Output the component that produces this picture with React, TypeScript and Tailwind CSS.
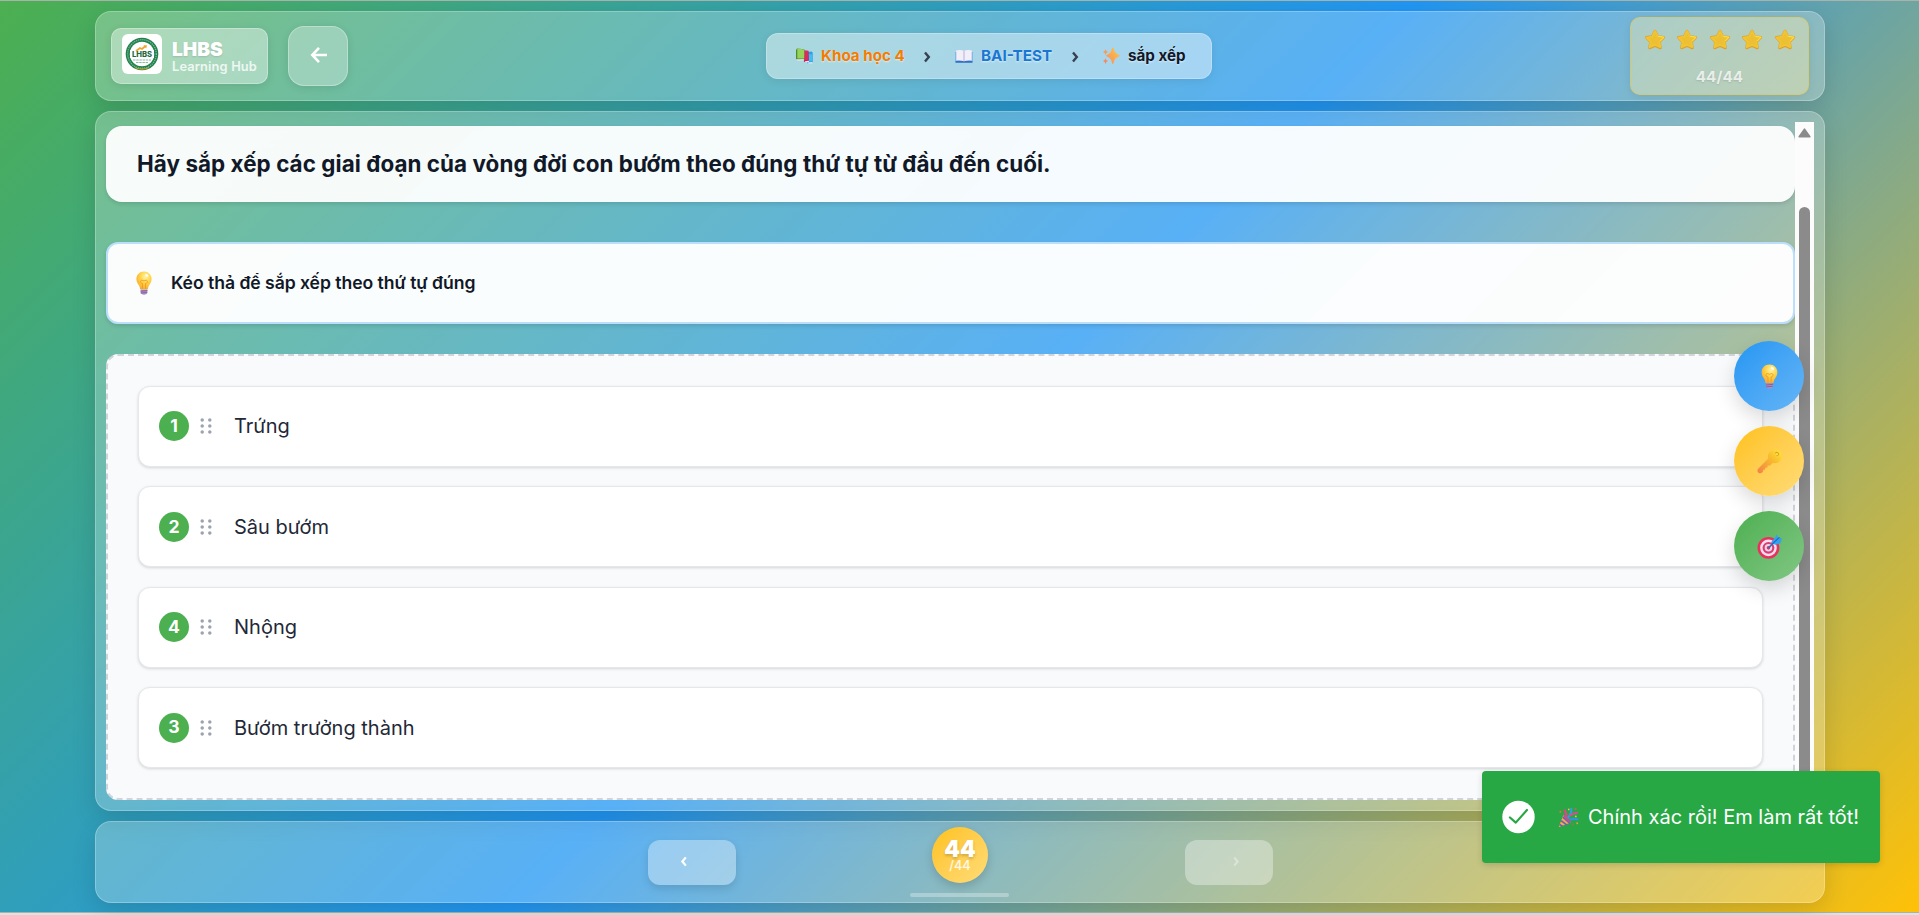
import type { ReactNode } from "react";

type IconProps = { className?: string };

function Bulb({ className }: IconProps) {
  return (
    <svg viewBox="0 0 24 24" className={className}>
      <defs>
        <radialGradient id="bulbGlass" cx="0.6" cy="0.3" r="0.75">
          <stop offset="0" stopColor="#fff3a8" />
          <stop offset="0.45" stopColor="#ffd54a" />
          <stop offset="1" stopColor="#f9a62b" />
        </radialGradient>
      </defs>
      <path d="M12 .4c4.400 0 7.600 3.300 7.600 7.500 0 3-1.500 4.700-2.700 6.700-.6 1-.9 2.200-1 3.600H8.100c-.1-1.400-.4-2.600-1-3.600-1.200-2-2.700-3.700-2.700-6.700C4.400 3.700 7.600.4 12 .4z" fill="url(#bulbGlass)" />
      <path d="M10.500 18v-5.500c-2.200 0-2.600-3.300-.5-3.300 1 0 1.300.7 2 .7s1-.7 2-.7c2.100 0 1.700 3.300-.5 3.300V18" fill="none" stroke="#f39a1f" strokeWidth="0.9" />
      <ellipse cx="14.800" cy="4.300" rx="1.800" ry="1.300" fill="#fffbe6" transform="rotate(35 14.800 4.300)" />
      <path d="M8.600 18.400h6.800v3.400c0 1-1.500 1.900-3.400 1.900s-3.400-.9-3.400-1.900z" fill="#a98fc4" />
      <path d="M8.600 20.200l6.800-.7M8.800 22l6.400-.7" stroke="#7d5a94" strokeWidth="0.8" />
    </svg>
  );
}

function KeyIcon({ className }: IconProps) {
  return (
    <svg viewBox="0 0 24 24" className={className}>
      <defs>
        <linearGradient id="keyBody" gradientUnits="userSpaceOnUse" x1="22" y1="2" x2="2" y2="22">
          <stop offset="0" stopColor="#ffe03a" />
          <stop offset="0.4" stopColor="#f8ba2c" />
          <stop offset="1" stopColor="#f58448" />
        </linearGradient>
      </defs>
      <path d="M11 8.800L.9 19.200c-.7.800-.6 2-.1 2.900.5 1 1.500 1.300 2.500 1.100 1.400-.2 2-.8 2.600-1.900l-.1-1.500 1.800.1.400-2 2-.2.200-1.800 2 .1 3.600-3.200z" fill="url(#keyBody)" />
      <path d="M12 2.900c2.400-2.700 7.100-3.400 9.700-.9 2.700 2.500 2.500 7 .2 9.500-2.400 2.600-6.600 2.900-9.300.5-2.600-2.400-2.700-6.700-.6-9.100z" fill="url(#keyBody)" />
      <ellipse cx="19.300" cy="4.600" rx="2" ry="1.600" fill="#dba013" transform="rotate(35 19.300 4.600)" />
      <ellipse cx="18.900" cy="5" rx="1.400" ry="1.100" fill="#ffdb5c" />
    </svg>
  );
}

function Target({ className }: IconProps) {
  return (
    <svg viewBox="0 0 24 24" className={className}>
      <circle cx="11" cy="13.300" r="10.500" fill="#e8315f" />
      <circle cx="11" cy="13.300" r="8" fill="#f3dfef" />
      <circle cx="11" cy="13.300" r="5.700" fill="#dd3a70" />
      <circle cx="11" cy="13.300" r="3.600" fill="#f1d5e6" />
      <circle cx="11" cy="13.300" r="1.700" fill="#d83168" />
      <path d="M11 13.300l6-5.600" stroke="#3b6fb0" strokeWidth="1.500" />
      <path d="M13.300 8.200l4.600-5.400.9-2.500 1.600 3.300 3.500.4-.5 1.700-1 3.300-4.800 1.300z" fill="#35a0ee" />
      <path d="M14.500 9.700l7-6.500" stroke="#1668c4" strokeWidth="1" />
    </svg>
  );
}

function Star() {
  return (
    <svg viewBox="0 0 24 24" className="h-[22px] w-[22px]">
      <path d="M12 2.200l3 6 6.600 1-4.700 4.800 1 6.700L12 18l-5.900 2.700 1-6.700-4.700-4.800 6.600-1z" fill="#d99a2b" stroke="#dba02c" strokeWidth="2.900" strokeLinejoin="round" />
      <path d="M12 2.200l3 6 6.400 1-4.600 4.500 1 6L12 17.300l-5.800 2.600 1-6-4.600-4.500 6.400-1z" fill="#edc033" stroke="#f0c433" strokeWidth="2" strokeLinejoin="round" />
      <path d="M15.500 7.800l6.300 1.200-4 4" fill="none" stroke="#ffe04a" strokeWidth="1" />
    </svg>
  );
}

function Books() {
  return (
    <svg viewBox="0 0 18 18" className="h-[18px] w-[18px]">
      <path d="M10 5.500l6.500-.9 1.200 1v10.200l-5.300.5z" fill="#2e9fe6" />
      <path d="M11 7.200h6v7h-4z" fill="#3cc0f5" />
      <path d="M6.500 3.200l6.800.6.600 10.200-4.800.9z" fill="#b3174e" />
      <path d="M8.600 4h4.900v9.600H9.700z" fill="#e0285f" />
      <path d="M1 3l1-1.600 7.400.9V12L2.500 13 1 11.800z" fill="#4c8d2e" />
      <path d="M2.300 1.500l6.900.9v9.200H2.300z" fill="#95d35b" />
      <path d="M1.200 12.200l8 .1v1.200l-6.500.2z" fill="#e8dff2" />
      <path d="M9.400 14.300l4.600-.6v1.200l-3 .4z" fill="#f0dcea" />
      <path d="M12.500 15.600l5-.5v1.100l-4 .3z" fill="#dceefa" />
    </svg>
  );
}

function OpenBook() {
  return (
    <svg viewBox="0 0 18 18" className="h-[18px] w-[18px]">
      <path d="M.6 5h16.800v10.600H.6z" fill="#4c8bd6" />
      <path d="M.6 14h16.800v1.600H.6z" fill="#2f6fc4" />
      <path d="M1.200 3.500c2.700-.8 5.500-.7 7.800.5 2.300-1.200 5.100-1.300 7.800-.5v10.300c-2.700-.5-5.500-.4-7.800.4-2.300-.8-5.100-.9-7.800-.4z" fill="#f3effa" />
      <path d="M9 4v10.200" stroke="#b9b0d0" strokeWidth="1" />
    </svg>
  );
}

function SparkleIcon() {
  return (
    <svg viewBox="0 0 18 18" className="h-[18px] w-[18px]">
      <defs>
        <linearGradient id="sparkFill" x1="1" y1="0" x2="0" y2="1">
          <stop offset="0" stopColor="#ffc93a" />
          <stop offset="1" stopColor="#f98b62" />
        </linearGradient>
      </defs>
      <path d="M10.800 1c1.200 4.600 2 5.900 6.400 7.700-4.400 1.800-5.200 3.100-6.400 7.700-1.200-4.600-2-5.900-6-7.700 4-1.800 4.800-3.100 6-7.700z" fill="url(#sparkFill)" stroke="url(#sparkFill)" strokeWidth="1.200" strokeLinejoin="round" />
      <path d="M3.500 2c.5 1.800 1 2.500 2.600 3.100-1.600.6-2.100 1.300-2.600 3.100C3 6.400 2.500 5.700.9 5.100 2.500 4.500 3 3.800 3.500 2z" fill="#fa9a54" />
      <path d="M3.500 11c.5 1.800 1 2.500 2.600 3.100-1.600.6-2.100 1.300-2.600 3.100-.5-1.800-1-2.500-2.600-3.100 1.600-.6 2.100-1.300 2.600-3.100z" fill="#f9875f" />
    </svg>
  );
}

function Party() {
  return (
    <svg viewBox="0 0 20 20" className="h-[21px] w-[21px]">
      <path d="M.6 19.300L5.200 7.400c2.800 1 6 4.200 7 7.400z" fill="#f7a93a" />
      <path d="M3 13l5.500 4.300M1.500 16.700l2.800 1.600M4.600 9.600l6.700 6" stroke="#6b5bd0" strokeWidth="1.500" />
      <ellipse cx="8.700" cy="11.200" rx="1.500" ry="4.800" transform="rotate(-43 8.700 11.200)" fill="#b0568f" />
      <path d="M7.600 9.800C8.200 7 7.600 4.600 5.700 2.700" fill="none" stroke="#ee3d8c" strokeWidth="2" />
      <path d="M9.400 10.300c2.600-2.600 3.600-5.500 3.300-9.500" fill="none" stroke="#2aa1e6" strokeWidth="2" />
      <path d="M11 8.200c2.300-1.600 4.600-2.600 8-2.600" fill="none" stroke="#e8449b" strokeWidth="1.800" />
      <path d="M11 12c3-1 5.800-.8 8.500 0" fill="none" stroke="#3193dd" strokeWidth="2" />
      <circle cx="2.300" cy="4.500" r="1" fill="#ef6f3a" />
      <circle cx="10.300" cy="2.300" r=".8" fill="#f7c63a" />
      <circle cx="16.800" cy="1.800" r=".9" fill="#ee4a80" />
      <circle cx="17" cy="9" r=".8" fill="#f7c63a" />
      <circle cx="18.300" cy="15.500" r=".9" fill="#f29a38" />
      <circle cx="14" cy="16.500" r=".7" fill="#e84a80" />
    </svg>
  );
}

function SchoolLogo() {
  return (
    <svg viewBox="0 0 40 40" className="h-10 w-10 rounded-[6px] bg-white">
      <circle cx="20" cy="20" r="16.300" fill="#20814d" />
      <circle cx="20" cy="20" r="14.300" fill="none" stroke="#7fb898" strokeWidth="1.300" strokeDasharray="1.200 .9" />
      <circle cx="20" cy="20" r="12.200" fill="#fff" />
      <rect x="8" y="16" width="24" height="8" fill="#fff" />
      <path d="M14 17l4-3 2 1 3.500-3" stroke="#efa52c" strokeWidth="1.800" fill="none" />
      <path d="M21.500 11.500l3.500-.2-.8 3.300z" fill="#efa52c" />
      <text x="20" y="22.600" textAnchor="middle" fontFamily="Inter, sans-serif" fontWeight="800" fontSize="7.600" fill="#1c6b43">LHBS</text>
      <path d="M11 26h18M14 28.500h12" stroke="#8dbda2" strokeWidth="1.100" strokeDasharray="2.500 .7" />
      <path d="M13 33.500c4.500 2 9.500 2 14 0" stroke="#c59b2c" strokeWidth="1.300" fill="none" />
    </svg>
  );
}

function Chevron({ left, className }: { left?: boolean; className?: string }) {
  return (
    <svg viewBox="0 0 8 12" className={className} fill="none" stroke="currentColor" strokeWidth="2.400">
      <path d={left ? "M6 1.500L2.200 6 6 10.500" : "M2 1.500L5.800 6 2 10.500"} />
    </svg>
  );
}

const glass = "border border-white/25 bg-white/25 shadow-[0_8px_24px_rgba(0,0,0,0.13)]";

function Header() {
  return (
    <header className={`flex h-[90px] shrink-0 items-center rounded-2xl px-[15px] ${glass}`}>
      <div className="flex w-[655px] items-center gap-5">
        <div className="flex h-14 w-[157px] items-center rounded-[10px] border border-white/30 bg-white/40 pl-[10px] shadow-[0_2px_8px_rgba(0,0,0,0.1)]">
          <div className="mb-[4px]"><SchoolLogo /></div>
          <div className="ml-[10px] text-white">
            <div className="text-[19.200px] leading-[20px] font-black [text-shadow:0_1px_2px_rgba(0,0,0,0.12)]">LHBS</div>
            <div className="text-[12.800px] leading-[15px] font-semibold tracking-[0.16px] whitespace-nowrap text-white/80">Learning Hub</div>
          </div>
        </div>
        <button className="flex h-[60px] w-[60px] items-center justify-center rounded-2xl border border-white/30 bg-white/30 text-white shadow-[0_2px_8px_rgba(0,0,0,0.1)]">
          <svg viewBox="0 0 18 18" className="mt-[-2px] ml-[2px] h-[18px] w-[18px]" fill="none" stroke="currentColor" strokeWidth="2.600">
            <path d="M17 9H2.500M9 1.900L2.300 9 9 16.100" />
          </svg>
        </button>
      </div>
      <nav className="flex h-[46px] w-[446px] items-center rounded-xl border border-white/25 bg-white/45 pl-7 text-[15.200px] font-bold whitespace-nowrap shadow-[0_2px_8px_rgba(0,0,0,0.08)] [text-shadow:0_1px_2px_rgba(255,255,255,0.6)]">
        <Books />
        <span className="ml-2 w-[83px] text-[#f57c00]">Khoa học 4</span>
        <Chevron className="mt-px ml-[19px] h-3 w-2 text-[#374151]" />
        <div className="ml-6"><OpenBook /></div>
        <span className="ml-2 w-[70px] text-[#1976d2]">BAI-TEST</span>
        <Chevron className="mt-px ml-[20px] h-3 w-2 text-[#374151]" />
        <div className="ml-[23px]"><SparkleIcon /></div>
        <span className="ml-2 text-[#111827]">sắp xếp</span>
      </nav>
      <div className="flex w-[597px] justify-end">
        <div className="flex h-[78px] w-[179px] flex-col items-center rounded-[10px] border border-[#ffc107]/40 bg-[#fff0b0]/40 pt-[11px] shadow-[0_2px_8px_rgba(0,0,0,0.08)]">
          <div className="flex gap-[10.500px]">
            {[0, 1, 2, 3, 4].map((n) => <Star key={n} />)}
          </div>
          <div className="mt-[16px] text-[15.200px] leading-5 font-bold tracking-[0.1px] text-white/75 [text-shadow:0_1px_2px_rgba(0,0,0,0.12)]">44/44</div>
        </div>
      </div>
    </header>
  );
}

const answers = [
  { order: 1, label: "Trứng" },
  { order: 2, label: "Sâu bướm" },
  { order: 4, label: "Nhộng" },
  { order: 3, label: "Bướm trưởng thành" },
];

function Grip() {
  return (
    <svg viewBox="0 0 12 16" className="h-4 w-3 fill-[#9ca3af]">
      {[2, 8, 14].map((y) => (
        <g key={y}>
          <circle cx="2.200" cy={y} r="1.750" />
          <circle cx="9.800" cy={y} r="1.750" />
        </g>
      ))}
    </svg>
  );
}

function Question() {
  return (
    <main className={`mt-[10px] flex h-[700px] shrink-0 rounded-2xl p-[10px] ${glass}`}>
      <div className="w-[1689px] pt-1">
        <h1 className="flex h-[76px] items-center rounded-2xl bg-white/94 pl-[31px] text-[22.400px] font-bold tracking-[0.065px] text-[#111827] shadow-[0_2px_4px_rgba(0,0,0,0.12)]">
          Hãy sắp xếp các giai đoạn của vòng đời con bướm theo đúng thứ tự từ đầu đến cuối.
        </h1>
        <div className="mt-10 flex h-[82px] items-center rounded-xl border-2 border-[#bbdefb] bg-white/97 pl-[24px] text-[17.600px] font-semibold tracking-[-0.05px] text-[#111827] shadow-[0_2px_4px_rgba(0,0,0,0.12)]">
          <Bulb className="h-6 w-6" />
          <span className="ml-[15px]">Kéo thả để sắp xếp theo thứ tự đúng</span>
        </div>
        <ul className="mt-[30px] flex h-[446px] flex-col gap-[19.500px] rounded-xl border-2 border-dashed border-[#d1d5db] bg-[#f9fafb] p-[30px]">
          {answers.map((a) => (
            <li key={a.order} className="flex flex-1 items-center rounded-xl border border-[#e5e7eb] bg-white pl-5 text-[20px] text-[#1f2937] shadow-[0_1px_3px_rgba(0,0,0,0.15)]">
              <span className="flex h-[30px] w-[30px] items-center justify-center rounded-full bg-[#4caf50] text-[17.600px] font-bold text-white">{a.order}</span>
              <span className="ml-[11px]"><Grip /></span>
              <span className="ml-[22px]">{a.label}</span>
            </li>
          ))}
        </ul>
      </div>
      <div className="flex w-[19px] flex-col items-center bg-[#fcfcfc]">
        <svg viewBox="0 0 13 10" className="mt-[6px] h-[10px] w-[13px]">
          <path d="M6.500 1.200L11.800 8.800H1.200z" fill="#8b8b8b" stroke="#8b8b8b" strokeWidth="1.600" strokeLinejoin="round" />
        </svg>
        <div className="mt-[69px] h-[573px] w-[11px] rounded-full bg-[#8b8b8b]" />
      </div>
    </main>
  );
}

function Footer() {
  return (
    <footer className={`relative mt-[10px] flex h-[82px] shrink-0 items-center rounded-2xl ${glass}`}>
      <button className="ml-[552px] flex h-[45px] w-[88px] items-center rounded-xl bg-white/35 pl-[32px] text-white shadow-[0_4px_8px_rgba(0,0,0,0.12)]">
        <Chevron left className="mt-[-1px] h-[11px] w-2" />
      </button>
      <div className="mt-[-14px] ml-[196px] flex h-14 w-14 flex-col items-center rounded-full bg-linear-to-br from-[#ffc107] to-[#ffdc75] pt-[11px] text-white shadow-[0_4px_10px_rgba(0,0,0,0.16)]">
        <span className="text-[22.400px] leading-[22px] font-black [text-shadow:0_2px_3px_rgba(0,0,0,0.18)]">44</span>
        <span className="text-[12.800px] leading-[11px] font-medium text-white/85">/44</span>
      </div>
      <button className="ml-[197px] flex h-[45px] w-[88px] items-center rounded-xl bg-white/35 pl-[47px] text-white/35">
        <Chevron className="mt-[-1px] h-[11px] w-2" />
      </button>
      <div className="absolute bottom-[5px] left-[814px] h-1 w-[99px] rounded-full bg-white/30" />
    </footer>
  );
}

function Fab({ tone, children }: { tone: string; children: ReactNode }) {
  return (
    <button className={`flex h-[70px] w-[70px] items-center justify-center rounded-full shadow-[0_8px_20px_rgba(0,0,0,0.15)] ${tone}`}>
      {children}
    </button>
  );
}

export default function App() {
  return (
    <div className="relative flex h-[915px] w-full flex-col overflow-hidden bg-[#dfe3df] font-['Inter','Noto_Sans',sans-serif]">
      <div className="h-px shrink-0 bg-[#a9b3ac]" />
      <div className="flex h-[911px] shrink-0 flex-col bg-[linear-gradient(135deg,#4caf50_0%,#2196f3_50%,#ffc107_100%)] px-[95px] pt-[10px] pr-[94px]">
        <Header />
        <Question />
        <Footer />
      </div>
      <div className="h-px shrink-0 bg-[#a9b1ac]" />

      <aside className="absolute top-[341px] right-[115px] flex flex-col gap-[15px]">
        <Fab tone="bg-linear-to-br from-[#2196f3] to-[#64b5f6]"><Bulb className="h-[25px] w-[25px]" /></Fab>
        <Fab tone="bg-linear-to-br from-[#ffc107] to-[#ffdc75]"><KeyIcon className="h-[25px] w-[25px]" /></Fab>
        <Fab tone="bg-linear-to-br from-[#4caf50] to-[#81c784]"><Target className="h-[25px] w-[25px]" /></Fab>
      </aside>

      <div role="status" className="absolute top-[771px] right-[39px] flex h-[92px] w-[398px] items-center rounded-[4px] bg-[#28a745] pl-5 text-[20px] whitespace-nowrap text-white shadow-[0_2px_6px_rgba(0,0,0,0.15)]">
        <svg viewBox="0 0 34 34" className="h-[34px] w-[33px]">
          <circle cx="17" cy="17" r="16.700" fill="#fff" />
          <path d="M8.200 17.500l6 5.300L25.700 9.800" fill="none" stroke="#28a745" strokeWidth="2.300" strokeLinecap="round" strokeLinejoin="round" />
        </svg>
        <div className="ml-[23px]"><Party /></div>
        <span className="ml-[9px]">Chính xác rồi! Em làm rất tốt!</span>
      </div>
    </div>
  );
}
